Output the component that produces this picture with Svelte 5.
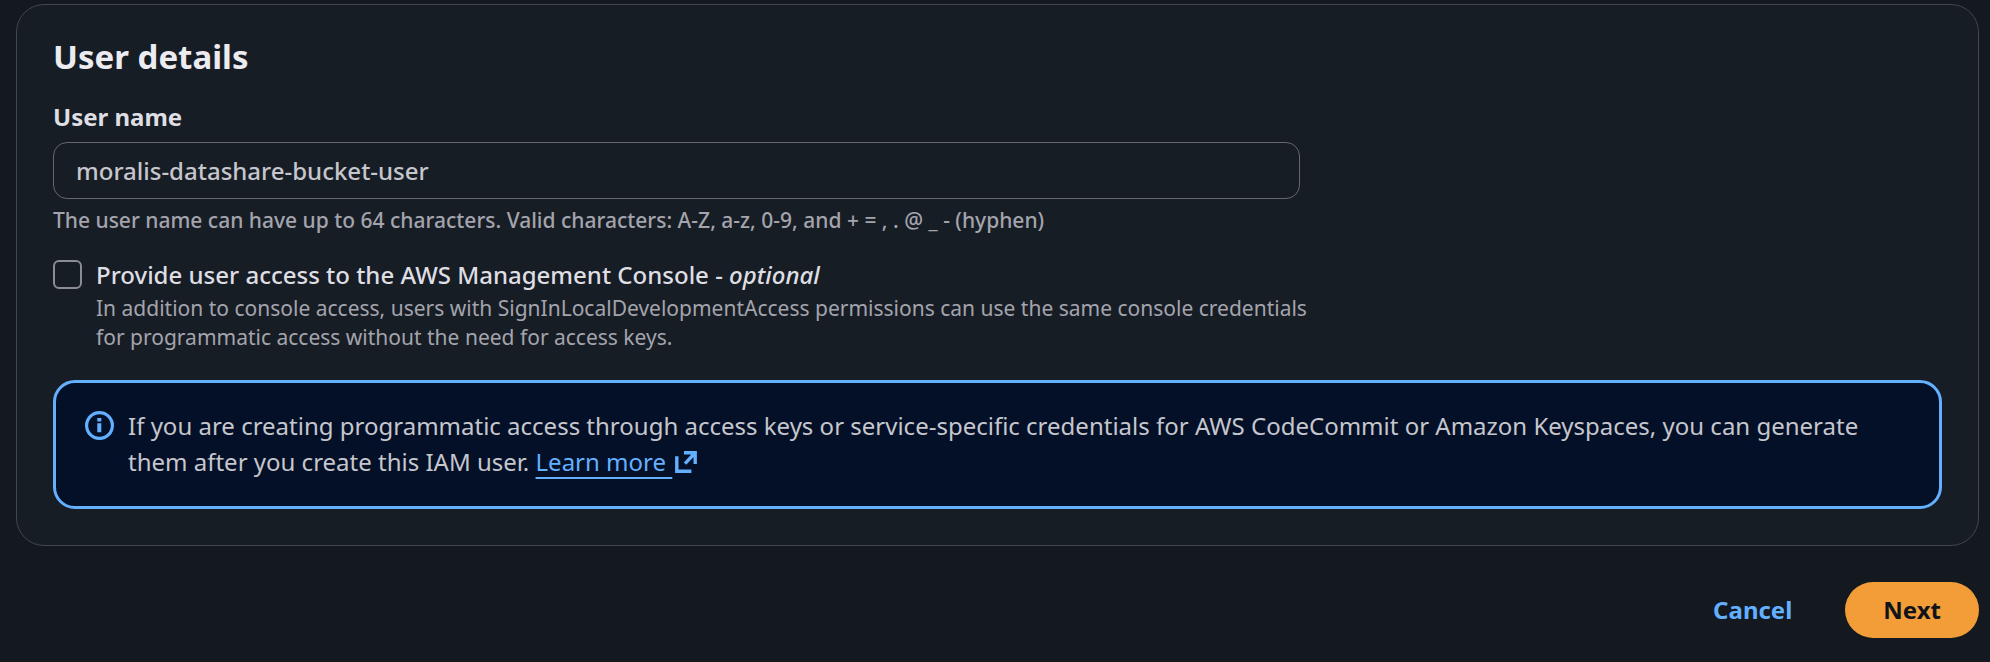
<script>
  let userName = $state('moralis-datashare-bucket-user');
  let consoleAccess = $state(false);
</script>

<main class="page">
  <section class="card" aria-labelledby="details-title">
    <h2 id="details-title">User details</h2>

    <div class="field">
      <label class="field-label" for="user-name">User name</label>
      <input
        id="user-name"
        class="text-input"
        type="text"
        maxlength="64"
        spellcheck="false"
        aria-describedby="user-name-hint"
        bind:value={userName}
      />
      <p id="user-name-hint" class="hint">
        The user name can have up to 64 characters. Valid characters: A-Z, a-z, 0-9, and + = , . @ _ - (hyphen)
      </p>
    </div>

    <div class="check-row">
      <input
        id="console-access"
        class="checkbox"
        type="checkbox"
        aria-describedby="console-access-hint"
        bind:checked={consoleAccess}
      />
      <div class="check-text">
        <label class="check-label" for="console-access">
          Provide user access to the AWS Management Console - <em>optional</em>
        </label>
        <p id="console-access-hint" class="description">
          In addition to console access, users with SignInLocalDevelopmentAccess permissions can use the same console credentials for programmatic access without the need for access keys.
        </p>
      </div>
    </div>

    <div class="alert">
      <svg class="info-icon" viewBox="0 0 29 29" aria-hidden="true">
        <circle cx="14.5" cy="14.5" r="12.9" fill="none" stroke="currentColor" stroke-width="3.2" />
        <path d="M12.3 7h4v3.4h-4zM12.3 12.2h4v9h-4z" fill="currentColor" />
      </svg>
      <p>
        If you are creating programmatic access through access keys or service-specific credentials for AWS CodeCommit or Amazon Keyspaces, you can generate them after you create this IAM user.
        <a href="#learn-more"><span class="link-text">Learn more&nbsp;</span><svg class="external-icon" viewBox="0 0 22 22" aria-hidden="true">
          <path d="M1.8 5.2v15h14.6M9 1.8h11.2V13M20 2L10 12.6" fill="none" stroke="currentColor" stroke-width="3.4" />
        </svg></a>
      </p>
    </div>
  </section>

  <footer class="actions">
    <button type="button" class="cancel">Cancel</button>
    <button type="button" class="next">Next</button>
  </footer>
</main>

<style>
  :global(body) {
    margin: 0;
    background: #14181f;
  }

  .page {
    padding: 4px 11px 24px 16px;
    border-bottom: 1px solid #0d1014;
    background: #14181f;
    color: #c6c6cd;
    font-family: 'Noto Sans', 'Open Sans', sans-serif;
    font-size: 24px;
    font-weight: 500;
    line-height: 36px;
  }

  .card {
    padding: 32px 36px 36px;
    border: 1px solid #424650;
    border-radius: 28px;
    background: #171d25;
  }

  h2 {
    margin: 0;
    color: #ebebf0;
    font-size: 33px;
    font-weight: 700;
    line-height: 40px;
  }

  p {
    margin: 0;
  }

  .field {
    display: flex;
    flex-direction: column;
    align-items: flex-start;
    width: 66%;
    margin-top: 22px;
  }

  .field-label {
    margin-bottom: 7px;
    color: #dedee3;
    font-weight: 700;
  }

  .text-input {
    box-sizing: border-box;
    width: 100%;
    height: 57px;
    padding: 0 22px;
    border: 1px solid #656871;
    border-radius: 14px;
    background: #171d25;
    color: #c6c6cd;
    font: inherit;
  }

  .hint,
  .description {
    color: #a4a4ad;
    font-size: 21px;
    line-height: 29px;
  }

  .hint {
    margin-top: 7px;
  }

  .description {
    margin-top: 1px;
    font-weight: 400;
  }

  .check-row {
    display: flex;
    align-items: flex-start;
    gap: 14px;
    width: 67%;
    margin-top: 22px;
  }

  .checkbox {
    flex: none;
    box-sizing: border-box;
    width: 29px;
    height: 29px;
    margin: 3px 0 0;
    border: 2px solid #8c8c94;
    border-radius: 6px;
    background: #171d25;
    appearance: none;
  }

  .checkbox:checked {
    border-color: #62b0ff;
    background: #62b0ff;
  }

  .check-label {
    display: block;
    color: #dedee3;
  }

  .alert {
    display: flex;
    gap: 14px;
    margin-top: 28px;
    padding: 25px 56px 26px 29px;
    border: 3px solid #62b0ff;
    border-radius: 22px;
    background: #031027;
    font-weight: 400;
  }

  .info-icon {
    flex: none;
    width: 29px;
    height: 29px;
    margin-top: 3px;
    color: #62b0ff;
  }

  a {
    color: #62b0ff;
    text-decoration: none;
  }

  .link-text {
    text-decoration: underline;
    text-decoration-skip-ink: none;
    text-decoration-thickness: 2px;
    text-underline-offset: 6px;
  }

  .external-icon {
    width: 22px;
    height: 22px;
    margin-left: 3px;
    vertical-align: -2px;
  }

  .actions {
    display: flex;
    justify-content: flex-end;
    gap: 15px;
    margin-top: 36px;
  }

  button {
    height: 56px;
    padding: 0 38px;
    border: 0;
    border-radius: 28px;
    background: none;
    font: inherit;
    font-weight: 700;
    cursor: pointer;
  }

  .cancel {
    color: #62b0ff;
  }

  .next {
    background: #f29d38;
    color: #101419;
  }
</style>
